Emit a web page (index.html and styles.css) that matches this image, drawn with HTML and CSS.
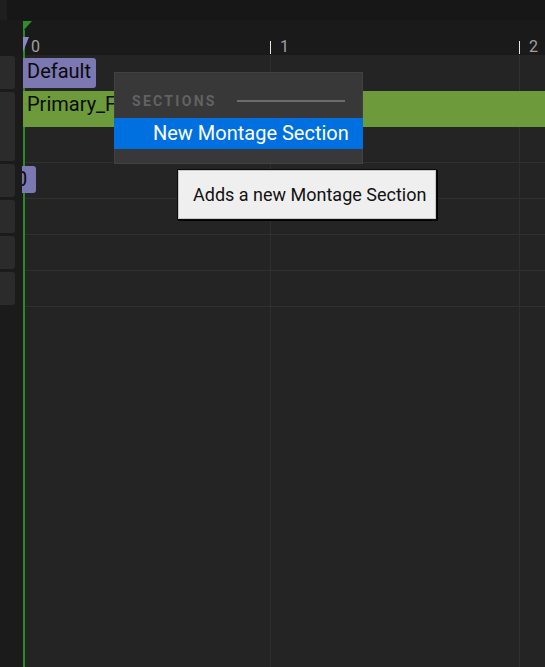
FILE: index.html
```html
<!DOCTYPE html>
<html>
<head>
<meta charset="utf-8">
<link rel="stylesheet" href="styles.css">
</head>
<body>
<div class="app">
  <div class="topbar"><div class="topbar-corner"></div><div class="topbar-fill"></div></div>
  <div class="ruler">
    <span class="tick t1"></span><span class="tick t2"></span>
    <span class="label l0">0</span><span class="label l1">1</span><span class="label l2">2</span>
  </div>
  <div class="side">
    <div class="side-box"></div>
    <div class="side-box tall"></div>
    <div class="side-box"></div>
    <div class="side-box"></div>
    <div class="side-box"></div>
    <div class="side-box"></div>
  </div>
  <div class="tracks">
    <div class="row row-first"><div class="chip">Default</div></div>
    <div class="row row-tall"><div class="bar">Primary_Fire_Montage</div></div>
    <div class="row"><div class="chip chip-clipped"><span>0</span></div></div>
    <div class="row"></div>
    <div class="row"></div>
    <div class="row"></div>
  </div>

  <div class="playhead-head"></div>
  <div class="playhead-line"></div>
  <div class="section-marker"></div>

  <div class="menu">
    <div class="menu-header"><span class="menu-title">SECTIONS</span><span class="menu-rule"></span></div>
    <div class="menu-item">New Montage Section</div>
  </div>
  <div class="tooltip">Adds a new Montage Section</div>
</div>
</body>
</html>
```

FILE: styles.css
```css
html, body {
  margin: 0;
  padding: 0;
}
body {
  width: 545px;
  height: 667px;
  overflow: hidden;
  background: #1b1b1b;
  font-family: Roboto, "Noto Sans", sans-serif;
}
.app {
  position: relative;
  width: 545px;
  height: 667px;
  display: grid;
  grid-template-columns: 23px 1fr;
  grid-template-rows: 20px 35px 1fr;
}
.topbar {
  grid-column: 1 / -1;
  display: flex;
}
.topbar-corner {
  width: 7px;
  background: #1f1f1f;
}
.topbar-fill {
  flex: 1;
  background: #171717;
}
.ruler {
  grid-column: 1 / -1;
  position: relative;
  background: #1a1a1a;
}
.tick {
  position: absolute;
  top: 21px;
  width: 1px;
  height: 13px;
  background: #e6e6e6;
}
.t1 { left: 270px; }
.t2 { left: 519px; }
.label {
  position: absolute;
  top: 19px;
  font-size: 16px;
  line-height: 16px;
  color: #a0a0a0;
}
.l0 { left: 31px; }
.l1 { left: 280px; }
.l2 { left: 529px; }

.side {
  background: #1b1b1b;
  display: flex;
  flex-direction: column;
  gap: 3px;
  padding-top: 1px;
}
.side-box {
  width: 15px;
  height: 33px;
  background: #2b2b2b;
  border-radius: 0 3px 3px 0;
}
.side-box.tall {
  height: 69px;
}

.tracks {
  background-color: #242424;
  background-image: linear-gradient(#2f2f2f, #2f2f2f), linear-gradient(#2f2f2f, #2f2f2f);
  background-size: 1px 100%, 1px 100%;
  background-position: 247px 0, 496px 0;
  background-repeat: no-repeat;
  display: flex;
  flex-direction: column;
}
.row {
  height: 35px;
  border-bottom: 1px solid #303030;
  flex: none;
}
.row-first {
  border-bottom-color: transparent;
}
.row-tall {
  height: 71px;
}
.chip {
  position: relative;
  z-index: 3;
  margin-top: 3px;
  width: 69px;
  height: 30px;
  padding-left: 4px;
  background: #7b78b2;
  color: #0a0a0a;
  font-size: 20px;
  line-height: 26px;
  border-radius: 0 3px 3px 0;
}
.chip-clipped {
  margin-left: -1px;
  width: 14px;
  height: 27px;
  padding-left: 0;
  overflow: hidden;
  white-space: nowrap;
}
.chip-clipped span {
  display: block;
  margin-left: -6px;
}
.bar {
  position: relative;
  z-index: 3;
  height: 36px;
  background: #6d9a3b;
  color: #0a0a0a;
  font-size: 20px;
  line-height: 27px;
  padding-left: 4px;
  white-space: nowrap;
}

.playhead-head {
  position: absolute;
  z-index: 1;
  left: 23px;
  top: 21px;
  width: 0;
  height: 0;
  border-top: 10px solid #2e8f2a;
  border-right: 9px solid transparent;
}
.playhead-line {
  position: absolute;
  z-index: 1;
  left: 23px;
  top: 30px;
  bottom: 0;
  width: 2px;
  background: #2b8a28;
}
.section-marker {
  position: absolute;
  z-index: 2;
  left: 23px;
  top: 37px;
  width: 0;
  height: 0;
  border-top: 15px solid #8a88c4;
  border-right: 6px solid transparent;
}

.menu {
  position: absolute;
  z-index: 5;
  left: 114px;
  top: 72px;
  width: 247px;
  height: 90px;
  background: #383838;
  border: 1px solid #414141;
}
.menu-header {
  height: 45px;
  display: flex;
  align-items: center;
  padding: 11px 17px 0 17px;
  box-sizing: border-box;
}
.menu-title {
  font-size: 14px;
  font-weight: bold;
  letter-spacing: 2.3px;
  color: #626262;
}
.menu-rule {
  margin-left: 20px;
  flex: 1;
  height: 2px;
  background: #6c6c6c;
}
.menu-item {
  height: 31px;
  margin: 0 -1px;
  background: #0070e0;
  color: #ffffff;
  font-size: 20px;
  line-height: 31px;
  padding-left: 39px;
}

.tooltip {
  position: absolute;
  z-index: 6;
  left: 177px;
  top: 169px;
  width: 260px;
  height: 51px;
  box-sizing: border-box;
  background: #efefef;
  border: 1px solid #0c0c0c;
  box-shadow: inset 0 0 0 1px #c8c8c8, 1px 1px 0 #000;
  color: #111111;
  font-size: 18px;
  line-height: 50px;
  padding-left: 15px;
  white-space: nowrap;
}
```
